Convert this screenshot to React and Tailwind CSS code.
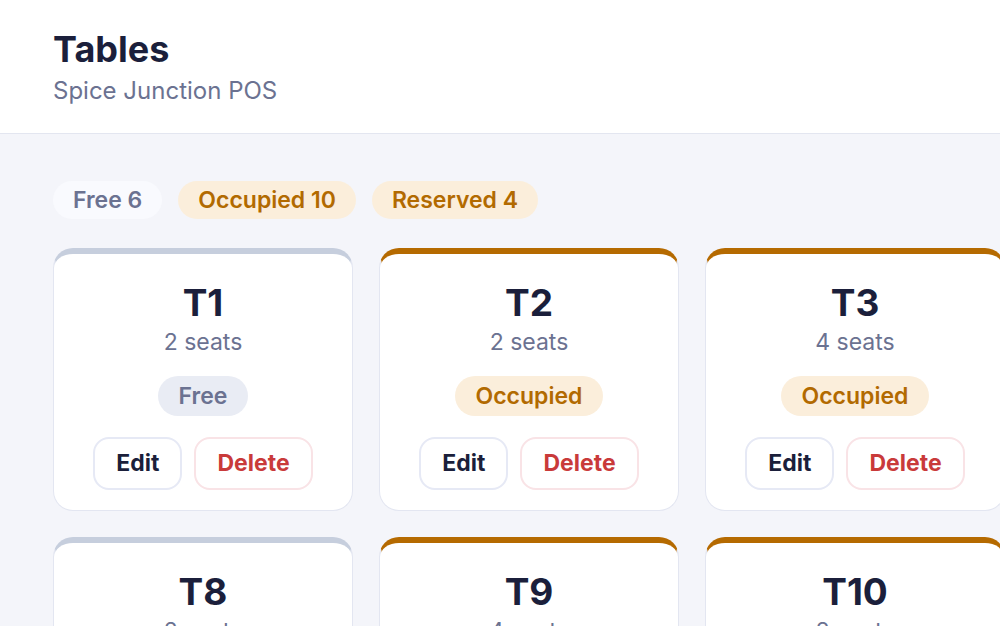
import React from 'react';

const tables = [
    { name: 'T1', seats: 2, status: 'Free' },
    { name: 'T2', seats: 2, status: 'Occupied' },
    { name: 'T3', seats: 4, status: 'Occupied' },
    { name: 'T8', seats: 2, status: 'Free' },
    { name: 'T9', seats: 4, status: 'Occupied' },
    { name: 'T10', seats: 8, status: 'Occupied' },
];

const statusStyles = {
    Free: { top: 'border-t-[#c6cedd]', badge: 'bg-[#e9ecf4] text-[#6b7291]' },
    Occupied: { top: 'border-t-[#b56a00]', badge: 'bg-[#fbeedb] text-[#b26a00]' },
    Reserved: { top: 'border-t-[#b56a00]', badge: 'bg-[#fbeedb] text-[#b26a00]' },
};

const TableCard = ({ table }) => {
    const s = statusStyles[table.status];
    return (
        <div className={`bg-white border border-[#e3e6f1] border-t-[6px] ${s.top} rounded-[20px] pt-[28px] pb-5 flex flex-col items-center`}>
            <div className="text-[37px] leading-[41px] font-bold text-[#1b1f3b]">{table.name}</div>
            <div className="mt-1 text-[23px] leading-[30px] text-[#6b7291]">{table.seats} seats</div>
            <div className={`mt-[19px] h-10 px-[21px] rounded-full flex items-center text-[23px] font-semibold ${s.badge}`}>
                {table.status}
            </div>
            <div className="mt-[21px] flex gap-3">
                <button className="h-[53px] px-[21px] rounded-2xl border-2 border-[#e6e9f5] bg-white text-[23px] font-bold text-[#1b1f3b]">
                    Edit
                </button>
                <button className="h-[53px] px-[21px] rounded-2xl border-2 border-[#f9e3e6] bg-white text-[23px] font-bold text-[#c93a3a]">
                    Delete
                </button>
            </div>
        </div>
    );
};

export default function App() {
    return (
        <div className="h-screen bg-[#f4f5fa] font-['Inter',sans-serif] overflow-hidden">
            <header className="bg-white border-b border-[#e3e6f0] px-[53px] pt-[29px] pb-[27px]">
                <h1 className="text-[36px] leading-[41px] font-bold text-[#1b1f3b]">Tables</h1>
                <p className="mt-[6px] text-[24px] leading-[30px] text-[#6b7291]">Spice Junction POS</p>
            </header>

            <main className="px-[53px] pt-[47px]">
                <div className="flex gap-4">
                    <span className="h-[38px] px-5 rounded-full bg-[#f9fafe] text-[#6b7291] text-[23px] font-semibold flex items-center">Free 6</span>
                    <span className="h-[38px] px-5 rounded-full bg-[#fbeedb] text-[#b26a00] text-[23px] font-semibold flex items-center">Occupied 10</span>
                    <span className="h-[38px] px-5 rounded-full bg-[#fbeedb] text-[#b26a00] text-[23px] font-semibold flex items-center">Reserved 4</span>
                </div>

                <div className="mt-[29px] grid grid-cols-[300px_300px_300px] gap-[26px]">
                    {tables.map((t) => (
                        <TableCard key={t.name} table={t} />
                    ))}
                </div>
            </main>
        </div>
    );
}
